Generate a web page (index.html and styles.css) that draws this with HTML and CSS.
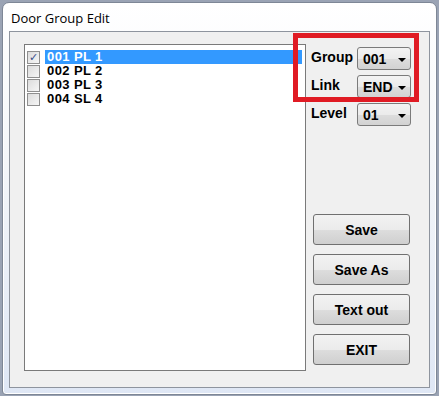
FILE: index.html
```html
<!DOCTYPE html>
<html lang="en">
<head>
  <meta charset="UTF-8" />
  <title>Door Group Edit</title>
  <link rel="stylesheet" href="styles.css">
</head>
<body>
  <div class="window">
    <div class="title">Door Group Edit</div>
    <div class="client">
      <div class="listbox">
        <div class="item selected"><span class="check checked">&#10003;</span><span class="label">001 PL 1</span></div>
        <div class="item"><span class="check"></span><span class="label">002 PL 2</span></div>
        <div class="item"><span class="check"></span><span class="label">003 PL 3</span></div>
        <div class="item"><span class="check"></span><span class="label">004 SL 4</span></div>
      </div>
      <div class="side">
        <div class="field"><span class="name">Group</span><div class="combo">001<span class="arrow"></span></div></div>
        <div class="field"><span class="name">Link</span><div class="combo">END<span class="arrow"></span></div></div>
        <div class="field"><span class="name">Level</span><div class="combo">01<span class="arrow"></span></div></div>
        <div class="buttons">
          <button>Save</button>
          <button>Save As</button>
          <button>Text out</button>
          <button>EXIT</button>
        </div>
        <div class="mark"></div>
      </div>
    </div>
  </div>
</body>
</html>
```

FILE: styles.css
```css
body {
  margin: 0;
  background: #9aa3b4;
  width: 439px;
  height: 396px;
  overflow: hidden;
}
.window {
  margin: 2px 0 0 2px;
  width: 433px;
  height: 391px;
  background: linear-gradient(#ffffff, #f4f6f9 40%, #dfe7f5);
  border: 1px solid #7e8796;
  border-radius: 7px 7px 4px 4px;
  box-shadow: inset 0 0 0 1px #ffffff;
  display: flex;
  flex-direction: column;
}
.title {
  height: 28px;
  line-height: 30px;
  padding-left: 8px;
  font-family: "Open Sans", "Noto Sans", sans-serif;
  font-size: 13px;
  color: #000;
}
.client {
  margin: 0 6px 4px 6px;
  height: 357px;
  background: #f0f0f0;
  border: 1px solid #8e949e;
  display: flex;
  padding: 12px 0 0 14px;
  box-sizing: border-box;
  font-family: "Liberation Sans", Arial, sans-serif;
  font-size: 14px;
  font-weight: bold;
}
.listbox {
  width: 282px;
  height: 327px;
  box-sizing: border-box;
  background: #fff;
  border: 1px solid #7a7a7a;
  padding: 5px 0 0 2px;
}
.item {
  display: flex;
  align-items: center;
  height: 14px;
}
.check {
  width: 11px;
  height: 11px;
  border: 1px solid #8f8f8f;
  background: linear-gradient(135deg, #dcdcdc, #f6f6f6);
  margin-right: 5px;
  font-size: 11px;
  line-height: 11px;
  text-align: center;
  color: #3a4f8c;
  font-family: "DejaVu Sans", sans-serif;
}
.label {
  flex: 1;
  height: 14px;
  line-height: 14px;
  padding-left: 2px;
  font-size: 13px;
  letter-spacing: 0.4px;
}
.item.selected .label {
  background: #3399ff;
  color: #fff;
  margin-right: 3px;
}
.side {
  position: relative;
  padding: 3px 0 0 5px;
}
.field {
  display: flex;
  align-items: center;
  height: 23px;
  margin-bottom: 5px;
}
.name {
  width: 46px;
  margin-top: -3px;
}
.combo {
  position: relative;
  width: 54px;
  height: 23px;
  box-sizing: border-box;
  border: 1px solid #7b7b7b;
  border-radius: 3px;
  background: linear-gradient(#f3f3f3, #ebebeb 50%, #dddddd 51%, #d2d2d2);
  line-height: 23px;
  padding-left: 5px;
}
.arrow {
  position: absolute;
  right: 4px;
  top: 10px;
  border-left: 4px solid transparent;
  border-right: 4px solid transparent;
  border-top: 4px solid #000;
}
.buttons {
  display: flex;
  flex-direction: column;
  gap: 9px;
  margin: 88px 0 0 2px;
}
button {
  width: 97px;
  height: 31px;
  border: 1px solid #707070;
  border-radius: 3px;
  background: linear-gradient(#f2f2f2, #ebebeb 50%, #dddddd 51%, #cfcfcf);
  font-family: "Liberation Sans", Arial, sans-serif;
  font-size: 14px;
  font-weight: bold;
  color: #000;
  padding: 0;
}
.mark {
  position: absolute;
  left: -13px;
  top: -11px;
  width: 116px;
  height: 59px;
  border: 5px solid #e01b24;
}
```
